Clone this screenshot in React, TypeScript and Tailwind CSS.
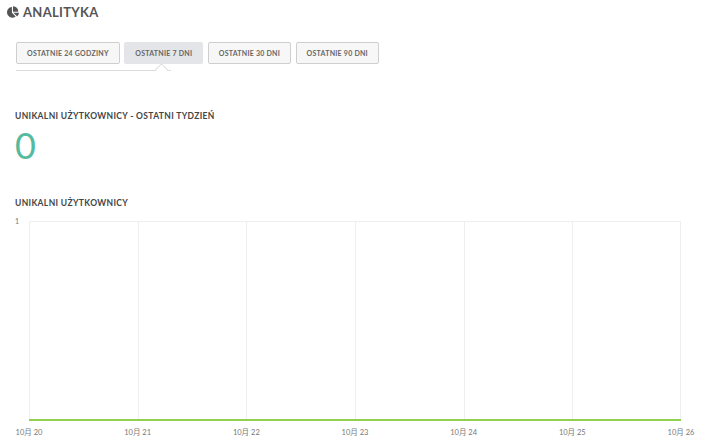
import { FaChartPie } from "react-icons/fa";

const ranges = ["Ostatnie 24 godziny", "Ostatnie 7 dni", "Ostatnie 30 dni", "Ostatnie 90 dni"];
const days = ["10月 20", "10月 21", "10月 22", "10月 23", "10月 24", "10月 25", "10月 26"];

const font = { fontFamily: "Lato, 'Noto Sans CJK SC', sans-serif" };

export default function App() {
  return (
    <div className="w-[713px] h-[445px] bg-white overflow-hidden text-[#555]" style={font}>
      <div className="flex items-center gap-[4px] pl-[7px] pt-[5px] h-[14px] box-content">
        <FaChartPie className="w-[12px] h-[12px] text-[#555]" />
        <h1 className="text-[13px] font-bold leading-none tracking-[0.3px] text-[#555]">ANALITYKA</h1>
      </div>

      <div className="ml-[16px] mt-[23px]">
        <div className="flex gap-[4.5px]">
          {ranges.map((r, i) => (
            <button
              key={r}
              className={
                "h-[22px] px-[10px] rounded-[2px] text-[7px] font-bold uppercase tracking-[0.25px] leading-none text-[#666] border " +
                (i === 1 ? "bg-[#e4e5e8] border-[#e4e5e8]" : "bg-[#f7f7f7] border-[#cfcfcf]")
              }
            >
              {r}
            </button>
          ))}
        </div>
        <div className="relative mt-[6px] w-[155px] h-px bg-[#dcdcdc]">
          <div className="absolute left-[141px] -top-[5px] w-[9px] h-[9px] rotate-45 bg-white border-l border-t border-[#dcdcdc]" />
        </div>
      </div>

      <div className="px-[15px]">
        <h2 className="mt-[41px] text-[8.5px] font-bold uppercase leading-none tracking-[0.35px] text-[#444]">
          Unikalni użytkownicy - ostatni tydzień
        </h2>
        <div className="mt-[8px] text-[36px] leading-[32px] font-normal text-[#55bba0]">0</div>

        <h2 className="mt-[38px] text-[8.5px] font-bold uppercase leading-none tracking-[0.35px] text-[#444]">
          Unikalni użytkownicy
        </h2>

        <div className="mt-[14px] flex">
          <div className="w-[14px] text-[7px] leading-none text-[#777] -mt-[3px]">1</div>
          <div className="w-[652px]">
            <div className="h-[200px] border-t border-[#eeeeee] grid grid-cols-6 relative">
              {[0, 1, 2, 3, 4, 5].map((c) => (
                <div key={c} className={"border-l border-[#eeeeee] " + (c === 5 ? "border-r" : "")} />
              ))}
              <div className="absolute left-0 right-0 bottom-0 h-[2px] bg-[#8fd14f]" />
            </div>
            <div className="flex justify-between mt-[8px]">
              {days.map((d) => (
                <div key={d} className="w-0 flex justify-center">
                  <span className="whitespace-nowrap text-[7.5px] leading-none text-[#777]">{d}</span>
                </div>
              ))}
            </div>
          </div>
        </div>
      </div>
    </div>
  );
}
